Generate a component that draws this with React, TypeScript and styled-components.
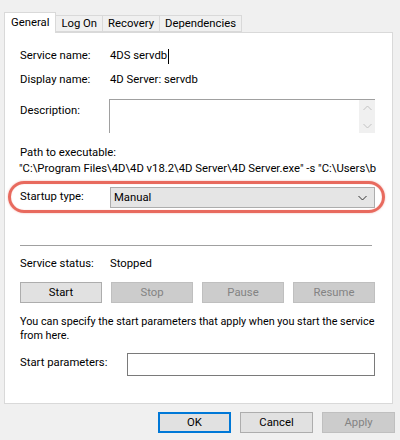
import React from 'react';
import styled, { createGlobalStyle } from 'styled-components';

const GlobalStyle = createGlobalStyle`
  html, body {
    margin: 0;
    padding: 0;
    background: #f0f0f0;
  }
  body {
    font-family: Roboto, "Liberation Sans", Arial, sans-serif;
    font-size: 11.3px;
    color: #000;
  }
`;

const Dialog = styled.div`
  width: 400px;
  height: 440px;
  background: #f0f0f0;
  overflow: hidden;
`;

const TabStrip = styled.div`
  display: flex;
  align-items: flex-end;
  padding: 12px 0 0 4px;
  height: 20px;
`;

const Tab = styled.div<{ $active?: boolean }>`
  box-sizing: border-box;
  height: ${(p) => (p.$active ? '21px' : '17px')};
  padding: 0 ${(p) => (p.$active ? '6px' : '5px')};
  margin-bottom: ${(p) => (p.$active ? '-1px' : '0')};
  display: flex;
  align-items: ${(p) => (p.$active ? 'flex-start' : 'center')};
  padding-top: ${(p) => (p.$active ? '3px' : '0')};
  background: ${(p) => (p.$active ? '#fff' : '#f0f0f0')};
  border: 1px solid #d9d9d9;
  border-bottom: ${(p) => (p.$active ? 'none' : '1px solid #d9d9d9')};
  margin-left: ${(p) => (p.$active ? '0' : '-1px')};
  position: relative;
  z-index: ${(p) => (p.$active ? 2 : 1)};
  white-space: nowrap;
`;

const Panel = styled.div`
  box-sizing: border-box;
  margin: 0 7px 0 4px;
  height: 372px;
  background: #fff;
  border: 1px solid #d9d9d9;
  padding: 13px 17px 0 15px;
`;

const FieldRow = styled.div<{ $gap?: number }>`
  display: grid;
  grid-template-columns: 90px 1fr;
  align-items: start;
  margin-top: ${(p) => p.$gap ?? 0}px;
`;

const Label = styled.div<{ $pad?: number }>`
  line-height: 20px;
  padding-top: ${(p) => p.$pad ?? 0}px;
  white-space: nowrap;
`;

const Value = styled.div`
  line-height: 20px;
  display: flex;
  align-items: center;
`;

const Caret = styled.span`
  display: inline-block;
  width: 1px;
  height: 15px;
  background: #000;
  margin-left: 1px;
`;

const TextArea = styled.div`
  position: relative;
  box-sizing: border-box;
  margin-left: -1px;
  height: 34px;
  border-top: 1px solid #a0a0a0;
  border-left: 1px solid #a0a0a0;
  background: #fff;
`;

const ScrollTrack = styled.div`
  position: absolute;
  right: 0;
  top: 0;
  bottom: 0;
  width: 16px;
  background: #f0f0f0;
  display: flex;
  flex-direction: column;
  justify-content: space-between;
  align-items: center;
  padding: 5px 0 4px;
  box-sizing: border-box;
`;

const PathBlock = styled.div`
  margin-top: 12px;
  line-height: 16px;
`;

const PathLine = styled.div`
  margin-left: -1px;
  white-space: nowrap;
`;

const Highlight = styled.div`
  margin: 4px -10px 0 -12px;
  height: 32px;
  box-sizing: border-box;
  border: 3px solid #e86a5e;
  border-radius: 16px;
  box-shadow: 0 0 2px rgba(232, 106, 94, 0.55), inset 0 0 1px rgba(232, 106, 94, 0.5);
  padding: 3px 7px 0 9px;
`;

const Select = styled.div`
  box-sizing: border-box;
  height: 21px;
  background: #e5e5e5;
  border: 1px solid #adadad;
  display: flex;
  align-items: center;
  justify-content: space-between;
  padding: 0 7px 0 3px;
`;

const Separator = styled.div`
  margin: 32px 3px 0 0;
  height: 1px;
  background: #a0a0a0;
`;

const ButtonRow = styled.div`
  display: grid;
  grid-template-columns: 82px 82px 82px 82px;
  justify-content: space-between;
  margin-top: 8px;
`;

const Button = styled.div<{ $disabled?: boolean; $default?: boolean }>`
  box-sizing: border-box;
  height: 21px;
  display: flex;
  align-items: center;
  justify-content: center;
  background: ${(p) => (p.$disabled ? '#cccccc' : '#e1e1e1')};
  border: ${(p) =>
    p.$default ? '2px solid #0078d7' : p.$disabled ? '1px solid #bfbfbf' : '1px solid #adadad'};
  color: ${(p) => (p.$disabled ? '#838383' : '#000')};
`;

const Note = styled.div`
  margin-top: 12px;
  line-height: 14px;
  white-space: nowrap;
  font-size: 10.8px;
`;

const Input = styled.div`
  box-sizing: border-box;
  height: 23px;
  margin-left: 17px;
  border: 1px solid #7a7a7a;
  background: #fff;
`;

const Footer = styled.div`
  display: flex;
  justify-content: flex-end;
  gap: 9px;
  padding: 8px 5px 0 0;
`;

const FooterButton = styled(Button)`
  width: 73px;
`;

const Chevron = ({ up, color }: { up?: boolean; color: string }) => (
  <svg width="9" height="6" viewBox="0 0 9 6">
    <path
      d={up ? 'M0.5 5 L4.5 1 L8.5 5' : 'M0.5 1 L4.5 5 L8.5 1'}
      fill="none"
      stroke={color}
      strokeWidth="1"
    />
  </svg>
);

export default function App() {
  return (
    <Dialog>
      <GlobalStyle />
      <TabStrip>
        <Tab $active>General</Tab>
        <Tab>Log On</Tab>
        <Tab>Recovery</Tab>
        <Tab>Dependencies</Tab>
      </TabStrip>
      <Panel>
        <FieldRow>
          <Label>Service name:</Label>
          <Value>
            4DS servdb<Caret />
          </Value>
        </FieldRow>
        <FieldRow $gap={4}>
          <Label>Display name:</Label>
          <Value>4D Server: servdb</Value>
        </FieldRow>
        <FieldRow $gap={9}>
          <Label $pad={2}>Description:</Label>
          <TextArea>
            <ScrollTrack>
              <Chevron up color="#c2c2c2" />
              <Chevron color="#c2c2c2" />
            </ScrollTrack>
          </TextArea>
        </FieldRow>
        <PathBlock>
          <div>Path to executable:</div>
          <PathLine>"C:\Program Files\4D\4D v18.2\4D Server\4D Server.exe" -s "C:\Users\b</PathLine>
        </PathBlock>
        <Highlight>
          <FieldRow>
            <Label>Startup type:</Label>
            <Select>
              <span>Manual</span>
              <Chevron color="#333" />
            </Select>
          </FieldRow>
        </Highlight>
        <Separator />
        <FieldRow $gap={8}>
          <Label>Service status:</Label>
          <Value>Stopped</Value>
        </FieldRow>
        <ButtonRow>
          <Button>Start</Button>
          <Button $disabled>Stop</Button>
          <Button $disabled>Pause</Button>
          <Button $disabled>Resume</Button>
        </ButtonRow>
        <Note>
          You can specify the start parameters that apply when you start the service
          <br />
          from here.
        </Note>
        <FieldRow $gap={10}>
          <Label $pad={0}>Start parameters:</Label>
          <Input />
        </FieldRow>
      </Panel>
      <Footer>
        <FooterButton $default>OK</FooterButton>
        <FooterButton>Cancel</FooterButton>
        <FooterButton $disabled>Apply</FooterButton>
      </Footer>
    </Dialog>
  );
}
